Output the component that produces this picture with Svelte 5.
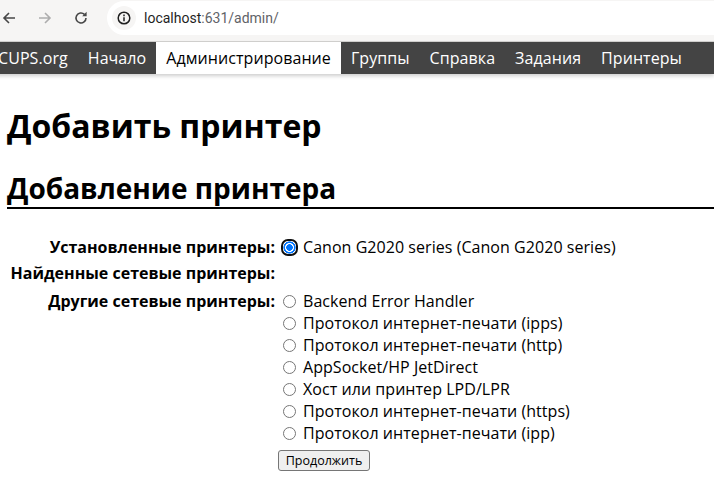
<script lang="ts">
  const navItems = ['CUPS.org', 'Начало', 'Администрирование', 'Группы', 'Справка', 'Задания', 'Принтеры'];
  const others = [
    'Backend Error Handler',
    'Протокол интернет-печати (ipps)',
    'Протокол интернет-печати (http)',
    'AppSocket/HP JetDirect',
    'Хост или принтер LPD/LPR',
    'Протокол интернет-печати (https)',
    'Протокол интернет-печати (ipp)'
  ];
</script>

<div class="toolbar">
  <svg class="icon back" viewBox="0 0 16 16" aria-hidden="true">
    <path d="M14 8H3M8 3L3 8l5 5" />
  </svg>
  <svg class="icon forward" viewBox="0 0 16 16" aria-hidden="true">
    <path d="M2 8h11M8 3l5 5-5 5" />
  </svg>
  <svg class="icon reload" viewBox="0 0 16 16" aria-hidden="true">
    <path d="M13 8a5 5 0 1 1-1.6-3.7" />
    <path class="solid" d="M13.6 1.8v4.4H9.2z" />
  </svg>
  <div class="omnibox">
    <span class="site-info">
      <svg viewBox="0 0 16 16" aria-hidden="true">
        <circle cx="8" cy="8" r="5.8" />
        <path d="M8 7.2v4M8 4.6v1.6" />
      </svg>
    </span>
    <span class="url"><b>localhost</b>:631/admin/</span>
  </div>
</div>

<nav class="nav">
  {#each navItems as item}
    <span class="nav-item" class:active={item === 'Администрирование'}>{item}</span>
  {/each}
</nav>

<main class="page">
  <h1>Добавить принтер</h1>
  <h2>Добавление принтера</h2>

  <form class="form" onsubmit={(e) => e.preventDefault()}>
    <div class="label first">Установленные принтеры:</div>
    <div class="options">
      <label class="option">
        <span class="radio checked"></span>
        Canon G2020 series (Canon G2020 series)
      </label>
    </div>

    <div class="label second">Найденные сетевые принтеры:</div>
    <div class="options"></div>

    <div class="label">Другие сетевые принтеры:</div>
    <div class="options">
      {#each others as name}
        <label class="option">
          <span class="radio"></span>
          {name}
        </label>
      {/each}
    </div>

    <div></div>
    <div><button type="submit" class="submit">Продолжить</button></div>
  </form>
</main>

<style>
  :global(body) {
    background: #fff;
    overflow: hidden;
    font-family: "Open Sans", "Noto Sans", sans-serif;
    color: #000;
  }

  .toolbar {
    box-sizing: border-box;
    display: flex;
    align-items: center;
    height: 42px;
    padding-bottom: 5px;
    background: #f6f5f4;
    border-bottom: 1px solid #d4d3d1;
  }

  .icon {
    width: 16px;
    height: 16px;
    flex: none;
    fill: none;
    stroke: #474747;
    stroke-width: 1.6;
  }

  .icon .solid {
    fill: #474747;
    stroke: none;
  }

  .back {
    margin-left: 1px;
  }

  .forward {
    margin-left: 20px;
    stroke: #adadad;
  }

  .reload {
    margin-left: 20px;
  }

  .omnibox {
    display: flex;
    align-items: center;
    flex: 1;
    height: 34px;
    margin-left: 18px;
    padding-left: 5px;
    background: #fff;
    border-radius: 17px 0 0 17px;
  }

  .site-info {
    display: flex;
    align-items: center;
    justify-content: center;
    width: 24px;
    height: 24px;
    border-radius: 50%;
    background: #f6f5f4;
  }

  .site-info svg {
    width: 16px;
    height: 16px;
    fill: none;
    stroke: #1f1f1f;
    stroke-width: 1.5;
  }

  .url {
    margin-left: 8px;
    font-family: Roboto, sans-serif;
    font-size: 14px;
    color: #5f6368;
  }

  .url b {
    font-weight: 400;
    color: #1f1f1f;
  }

  .nav {
    display: flex;
    height: 32px;
    margin-left: -12px;
    background: #444;
    box-shadow: 0 2px 4px rgba(0, 0, 0, 0.2);
    font-size: 16px;
    line-height: 32px;
    letter-spacing: 0.07px;
  }

  .nav-item {
    padding: 0 10px;
    color: #fff;
    white-space: nowrap;
  }

  .nav-item.active {
    background: #fff;
    color: #000;
  }

  .page {
    padding: 0 0 0 7px;
  }

  h1 {
    margin: 0;
    padding-top: 30px;
    font-size: 32px;
    line-height: 44px;
    font-weight: 700;
  }

  h2 {
    margin: 22px 0 0;
    font-size: 28px;
    line-height: 37px;
    font-weight: 700;
    border-bottom: 2px solid #000;
  }

  .form {
    display: grid;
    grid-template-columns: 268px 1fr;
    column-gap: 8px;
    margin-top: 27px;
    font-size: 16px;
    line-height: 22px;
    letter-spacing: 0.05px;
  }

  .label {
    font-weight: 700;
    text-align: right;
    padding-bottom: 5px;
    white-space: nowrap;
    letter-spacing: 0;
  }

  .label.first {
    padding-bottom: 4px;
  }

  .label.second {
    padding-bottom: 6px;
  }

  .option {
    display: flex;
    align-items: center;
    gap: 7px;
    height: 22px;
    white-space: nowrap;
  }

  .radio {
    box-sizing: border-box;
    width: 13px;
    height: 13px;
    border: 1px solid #767676;
    border-radius: 50%;
    background: #fff;
  }

  .radio.checked {
    border: none;
    border-radius: 5px;
    background: radial-gradient(circle, #0075ff 0 3px, #fff 3.6px 4.2px, #0075ff 4.8px 5.8px, #fff 6.4px);
    outline: 2px solid #101010;
    outline-offset: 0;
  }

  .submit {
    box-sizing: border-box;
    width: 92px;
    height: 21px;
    margin: 6px 0 0 -5px;
    padding: 0;
    font-family: inherit;
    font-size: 12.5px;
    color: #000;
    background: #efefef;
    border: 1px solid #767676;
    border-radius: 3px;
  }
</style>
